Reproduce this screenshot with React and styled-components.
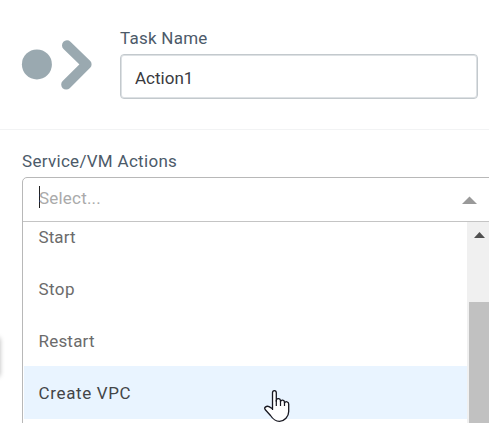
import React from "react";
import styled, { createGlobalStyle } from "styled-components";

const GlobalStyle = createGlobalStyle`
  * { box-sizing: border-box; }
  body { margin: 0; background: #fff; overflow: hidden; }
`;

const Page = styled.main`
  position: relative;
  width: 489px;
  height: 423px;
  overflow: hidden;
  background: #fff;
  font-family: Roboto, "Liberation Sans", sans-serif;
  font-size: 17px;
  line-height: 20px;
`;

const Header = styled.header`
  display: flex;
  height: 130px;
  border-bottom: 1px solid #f2f3f4;
`;

const TaskIcon = styled.svg`
  flex: none;
  width: 120px;
  height: 110px;
`;

const Field = styled.label`
  display: flex;
  flex-direction: column;
  padding-top: 28px;
`;

const Label = styled.span`
  height: 20px;
  color: #4c5a69;
  white-space: nowrap;
  letter-spacing: ${(p) => p.$spacing}px;
`;

const TextInput = styled.input`
  width: 358px;
  height: 45px;
  margin-top: 6px;
  padding: 3px 14px 0;
  border: 1px solid #c3c9cd;
  border-radius: 4px;
  outline: none;
  box-shadow: inset 0 0 0 1px #dde1e4;
  background: #fff;
  color: #3a3a3e;
  font: inherit;
  letter-spacing: 0;
`;

const Actions = styled.section`
  display: flex;
  flex-direction: column;
  padding: 21px 0 0 22px;
`;

const Select = styled.div`
  display: flex;
  flex-direction: column;
  width: 480px;
  height: 260px;
  margin-top: 6px;
  border: 1px solid #b8b8b8;
  border-radius: 5px 5px 0 0;
`;

const SelectControl = styled.div`
  display: flex;
  flex: none;
  align-items: center;
  height: 44px;
  padding: 0 24px 2px 16px;
  border-bottom: 1px solid #c4c4c4;
`;

const Caret = styled.span`
  width: 1px;
  height: 22px;
  margin-right: -1px;
  margin-top: -4px;
  background: #222;
`;

const Placeholder = styled.span`
  flex: 1;
  margin-top: -2px;
  color: #aaa;
  letter-spacing: 0.2px;
`;

const Arrow = styled.svg`
  width: 15px;
  height: 8px;
  margin-top: 3px;
`;

const Menu = styled.div`
  display: flex;
  flex: 1;
  min-height: 0;
  overflow: hidden;
  padding-left: 1px;
`;

const Options = styled.ul`
  width: 443px;
  margin: -11px 0 0;
  padding: 0;
  list-style: none;
`;

const Option = styled.li`
  display: flex;
  align-items: center;
  height: ${(p) => (p.$active ? 53 : 52)}px;
  margin-top: ${(p) => (p.$active ? -1 : 0)}px;
  padding-left: 14.5px;
  background: ${(p) => (p.$active ? "#e9f4ff" : "#fff")};
  color: ${(p) => (p.$active ? "#434547" : "#6b6b6b")};
  letter-spacing: ${(p) => p.$spacing}px;
`;

const Scrollbar = styled.div`
  display: flex;
  flex-direction: column;
  width: 24px;
  padding-left: 2px;
  background: #f0f0f0;
`;

const ScrollArrow = styled.svg`
  flex: none;
  width: 20px;
  height: 80px;
`;

const Thumb = styled.div`
  flex: 1;
  background: #c1c1c1;
`;

const Pointer = styled.svg`
  position: absolute;
  left: 262px;
  top: 388px;
  width: 30px;
  height: 35px;
`;

const EdgeShadow = styled.div`
  position: absolute;
  left: -8px;
  top: 336px;
  width: 8px;
  height: 40px;
  border-radius: 4px;
  box-shadow: 0 1px 5px 0 rgba(0, 0, 0, 0.28);
`;

const options = [
  { name: "Start", spacing: 0.1 },
  { name: "Stop", spacing: 0.4 },
  { name: "Restart", spacing: 0.2 },
  { name: "Create VPC", spacing: 0.65, active: true },
];

export default function App() {
  return (
    <>
      <GlobalStyle />
      <Page>
        <Header>
          <TaskIcon viewBox="0 0 120 110">
            <circle cx="36.9" cy="64.4" r="15" fill="#9aa9b0" />
            <path d="M67 45.3 86.6 64.3 66.2 84.6" fill="none" stroke="#9aa9b0" strokeWidth="10" strokeLinecap="round" strokeLinejoin="round" />
          </TaskIcon>
          <Field>
            <Label $spacing={0.25}>Task Name</Label>
            <TextInput defaultValue="Action1" />
          </Field>
        </Header>
        <Actions>
          <Label $spacing={0.3}>Service/VM Actions</Label>
          <Select>
            <SelectControl>
              <Caret />
              <Placeholder>Select...</Placeholder>
              <Arrow viewBox="0 0 15 8"><path d="M0 8 7.5.5 15 8Z" fill="#999" /></Arrow>
            </SelectControl>
            <Menu>
              <Options>
                {options.map((o) => (
                  <Option key={o.name} $spacing={o.spacing} $active={o.active}>{o.name}</Option>
                ))}
              </Options>
              <Scrollbar>
                <ScrollArrow viewBox="0 0 20 80"><path d="M5 16 10.5 10 16 16Z" fill="#505050" /></ScrollArrow>
                <Thumb />
              </Scrollbar>
            </Menu>
          </Select>
        </Actions>
        <EdgeShadow />
        <Pointer viewBox="0 0 30 35">
          <path d="M10.5 22V4.8C10.5 1.8 14.3 1.8 14.3 4.8V13.2V11.8C15.5 9.9 18.3 10.5 18.5 12.6V13.5C19.3 11.3 22.3 11.8 22.5 14V15C23.5 13 26.7 13.4 26.7 16V23.5C26.7 28.5 22.5 33.3 17.5 33.3C13.5 33.3 10.9 31.2 8.5 27.5L3.1 21.5C1.7 19.4 4.6 17.5 7 18.6L10.5 20.8" fill="#fff" stroke="#171720" strokeWidth="1.3" strokeLinejoin="round" />
          <path d="M14.3 12V18M18.5 13V18M22.5 14V18" fill="none" stroke="#171720" strokeWidth="1.2" />
        </Pointer>
      </Page>
    </>
  );
}
